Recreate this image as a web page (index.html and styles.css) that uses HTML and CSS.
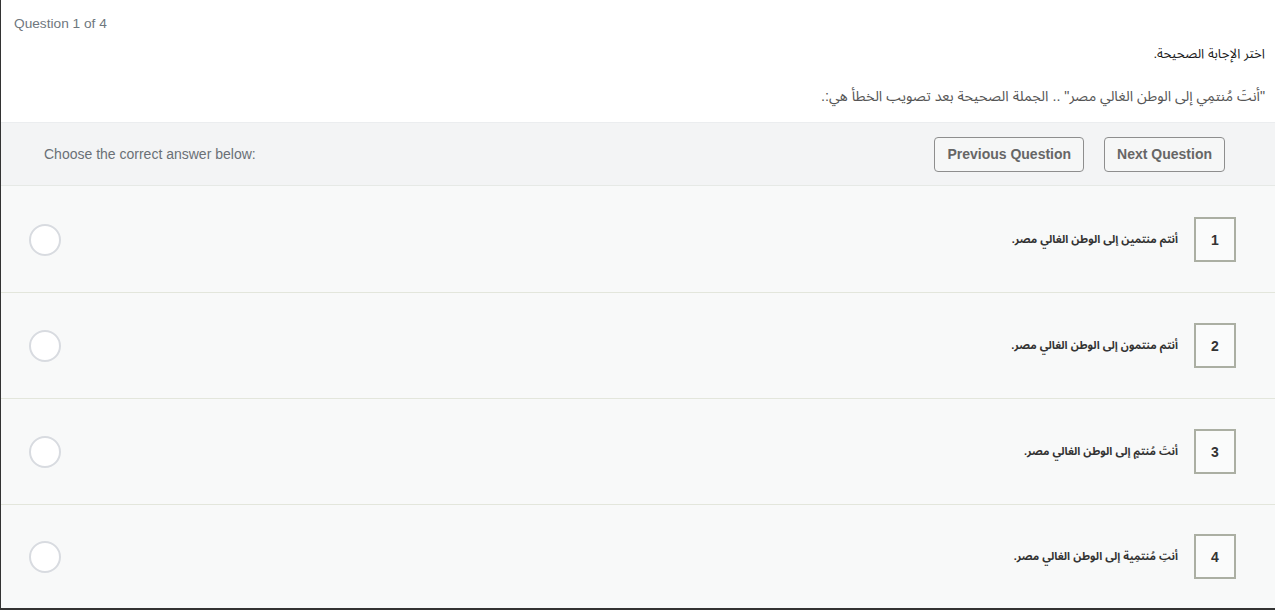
FILE: index.html
```html
<!DOCTYPE html>
<html lang="en">
<head>
<meta charset="utf-8">
<title>Quiz</title>
<link rel="stylesheet" href="styles.css">
</head>
<body>
<div class="quiz">
  <div class="q-head">
    <div class="q-count">Question 1 of 4</div>
    <div class="q-title" dir="rtl">اختر الإجابة الصحيحة.</div>
    <div class="q-text" dir="rtl">"أنتَ مُنتمِي إلى الوطن الغالي مصر" .. الجملة الصحيحة بعد تصويب الخطأ هي:.</div>
  </div>
  <div class="bar">
    <div class="bar-label">Choose the correct answer below:</div>
    <div class="bar-actions">
      <button class="btn">Previous Question</button>
      <button class="btn">Next Question</button>
    </div>
  </div>
  <div class="options">
    <div class="option">
      <span class="radio"></span>
      <div class="opt-main" dir="rtl"><span class="num">1</span><span class="opt-text">أنتم منتمين إلى الوطن الغالي مصر.</span></div>
    </div>
    <div class="option">
      <span class="radio"></span>
      <div class="opt-main" dir="rtl"><span class="num">2</span><span class="opt-text">أنتم منتمون إلى الوطن الغالي مصر.</span></div>
    </div>
    <div class="option">
      <span class="radio"></span>
      <div class="opt-main" dir="rtl"><span class="num">3</span><span class="opt-text">أنتَ مُنتمٍ إلى الوطن الغالي مصر.</span></div>
    </div>
    <div class="option last">
      <span class="radio"></span>
      <div class="opt-main" dir="rtl"><span class="num">4</span><span class="opt-text">أنتِ مُنتمِية إلى الوطن الغالي مصر.</span></div>
    </div>
  </div>
</div>
</body>
</html>
```
FILE: styles.css
```css
* { box-sizing: border-box; }
html, body { margin: 0; padding: 0; background: #fff; }
body {
  font-family: Arial, "Liberation Sans", "Noto Sans Arabic", "DejaVu Sans", sans-serif;
  width: 1275px;
  height: 610px;
  overflow: hidden;
}
.quiz {
  height: 610px;
  border-left: 1px solid #333;
  border-bottom: 2px solid #333;
  display: flex;
  flex-direction: column;
}
.q-head {
  height: 122px;
  padding: 16px 10px 0 13px;
  background: #fff;
}
.q-count {
  font-size: 13.7px;
  line-height: 16px;
  color: #6f777e;
}
.q-title {
  margin-top: 14px;
  font-size: 13.2px;
  line-height: 16px;
  color: #1a1a1a;
}
.q-text {
  margin-top: 26px;
  font-size: 14.3px;
  line-height: 16px;
  color: #555;
}
.bar {
  height: 64px;
  background: #f3f4f5;
  border-top: 1px solid #ebedef;
  border-bottom: 1px solid #e6e9e6;
  display: flex;
  align-items: center;
  justify-content: space-between;
  padding: 0 50px 0 43px;
}
.bar-label {
  font-size: 14px;
  color: #6a7076;
}
.bar-actions {
  display: flex;
  gap: 20px;
}
.btn {
  font-family: Arial, "Liberation Sans", sans-serif;
  font-weight: bold;
  font-size: 14px;
  color: #666;
  background: #f6f7f7;
  border: 1px solid #8e8e8e;
  border-radius: 4px;
  height: 35px;
  padding: 0 12px;
}
.options {
  flex: 1;
  display: flex;
  flex-direction: column;
  background: #f8f9f9;
  padding-top: 1px;
}
.option {
  height: 106px;
  border-bottom: 1px solid #e3e6dc;
  display: flex;
  align-items: center;
  justify-content: space-between;
  padding: 0 39px 0 28px;
}
.option.last {
  border-bottom: none;
  flex: 1;
}
.radio {
  width: 32px;
  height: 32px;
  border-radius: 50%;
  border: 2px solid #d8dbe0;
  background: #fff;
}
.opt-main {
  display: flex;
  align-items: center;
  gap: 16px;
}
.num {
  width: 42px;
  height: 45px;
  border: 2px solid #abafa3;
  display: flex;
  align-items: center;
  justify-content: center;
  font-weight: bold;
  font-size: 14px;
  color: #333;
  background: #fafbfb;
}
.opt-text {
  font-weight: bold;
  font-size: 11px;
  color: #333;
}
```
